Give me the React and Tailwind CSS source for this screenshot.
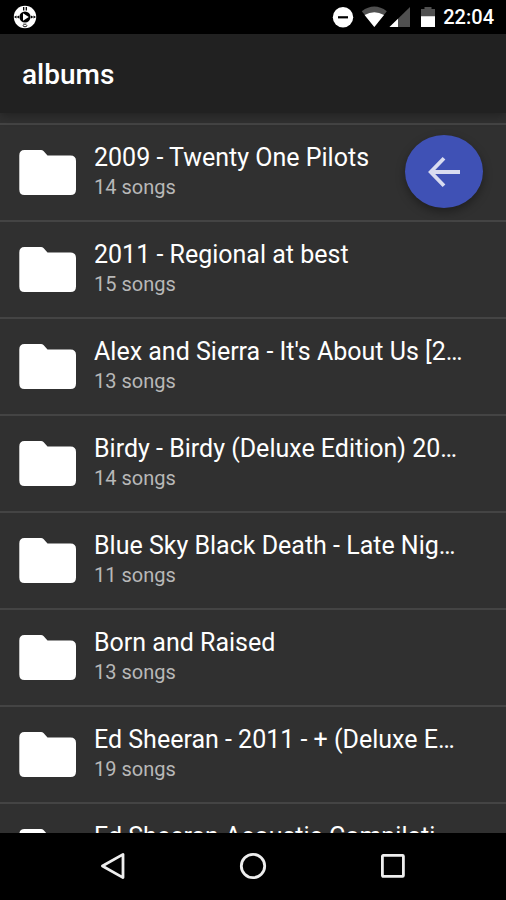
const albums = [
  { title: '2009 - Twenty One Pilots', songs: 14 },
  { title: '2011 - Regional at best', songs: 15 },
  { title: "Alex and Sierra - It's About Us [2…", songs: 13 },
  { title: 'Birdy - Birdy (Deluxe Edition) 20…', songs: 14 },
  { title: 'Blue Sky Black Death - Late Nig…', songs: 11 },
  { title: 'Born and Raised', songs: 13 },
  { title: 'Ed Sheeran - 2011 - + (Deluxe E…', songs: 19 },
  { title: 'Ed Sheeran Acoustic Compilati…', songs: 12 },
]

function PlayerIcon() {
  return (
    <svg width="24" height="24" viewBox="0 0 24 24" aria-hidden="true">
      <circle cx="12" cy="12" r="11.2" fill="#fff" />
      <circle cx="12" cy="12" r="5.6" fill="#000" />
      <path d="M10 8.2v7.6l5.8-3.8z" fill="#fff" />
      <path d="M10.7 2v3.6M13.3 2v3.6" stroke="#000" strokeWidth="1.3" />
      <path d="M1 12l2.5-1.6v3.2zM3.6 12l2.4-1.6v3.2zM23 12l-2.5-1.6v3.2zM20.4 12L18 10.4v3.2z" fill="#000" />
      <path d="M10.2 19.2h3.2M14 20.2a2 1.6 0 1 1-4 0" fill="none" stroke="#000" strokeWidth="0.9" />
    </svg>
  )
}

function StatusBar() {
  return (
    <div className="flex h-[34px] shrink-0 items-center bg-black pr-3 pl-[13px] text-white">
      <PlayerIcon />
      <div className="ml-auto flex items-center">
        <svg width="112" height="22" viewBox="0 0 112 22" aria-hidden="true">
          <circle cx="12" cy="11.3" r="10.2" fill="#fff" />
          <path d="M7 11.3h10" stroke="#000" strokeWidth="2.2" />
          <path d="M30.8 5.2Q43.3-4 55.8 5.2L43.3 21z" fill="#505050" />
          <path d="M33.6 9Q43.3 3.4 53 9L43.3 21z" fill="#fff" />
          <path d="M79 1v20H58.5z" fill="#505050" />
          <path d="M67 12.8V21h-8.5z" fill="#fff" />
          <path d="M90 3h3.5V1h7v2h3.5v7.5H90z" fill="#505050" />
          <path d="M90 10.2h14V21H90z" fill="#fff" />
        </svg>
        <span className="text-xl leading-6 font-medium">22:04</span>
      </div>
    </div>
  )
}

function FolderIcon() {
  return (
    <svg width="57" height="46" viewBox="0 0 57 46" className="shrink-0" aria-hidden="true">
      <path
        d="M5.5 0H22Q23.5 0 24.5 1L28.5 5.5H51.5Q57 5.5 57 11V39.5Q57 45 51.5 45H5.5Q.3 45 .3 39.5V5.5Q.3 0 5.5 0z"
        fill="#fff"
      />
    </svg>
  )
}

function AlbumRow({ album }) {
  return (
    <li className="border-t-2 border-[#444444]">
      <button type="button" className="flex h-[95px] w-full items-center gap-[18px] pr-8 pl-[19px] text-left">
        <FolderIcon />
        <span className="flex min-w-0 flex-1 flex-col pb-[6px]">
          <span className="truncate text-[25px] leading-[34px] text-white">{album.title}</span>
          <span className="text-xl leading-6 text-[#b8b8b8]">{album.songs} songs</span>
        </span>
      </button>
    </li>
  )
}

function NavButton({ label, children }) {
  return (
    <button type="button" aria-label={label} className="flex w-35 justify-center">
      <svg width="28" height="28" viewBox="0 0 28 28" fill="none" stroke="#eee" strokeWidth="2.8" strokeLinejoin="round">
        {children}
      </svg>
    </button>
  )
}

function NavBar() {
  return (
    <nav className="flex h-[67px] shrink-0 items-center justify-center bg-black pb-0.5">
      <NavButton label="Back">
        <path d="M24 2.4v23.2L3.4 14z" />
      </NavButton>
      <NavButton label="Home">
        <circle cx="14" cy="14" r="11.7" />
      </NavButton>
      <NavButton label="Recent apps">
        <rect x="3.4" y="3.4" width="21" height="21" rx="0.8" />
      </NavButton>
    </nav>
  )
}

export default function App() {
  return (
    <div className="flex h-screen flex-col bg-[#303030] font-['Roboto',sans-serif]">
      <StatusBar />
      <header className="z-10 flex h-[79px] shrink-0 items-center bg-[#212121] px-[22px] pt-0.5 shadow-[0_2px_10px_rgba(0,0,0,0.35)]">
        <h1 className="text-[28px] leading-8 font-medium text-white">albums</h1>
      </header>
      <main className="relative min-h-0 flex-1">
        <ul className="h-full overflow-y-auto pt-2.5 [scrollbar-width:none]">
          {albums.map((album) => (
            <AlbumRow key={album.title} album={album} />
          ))}
        </ul>
        <button
          type="button"
          aria-label="Go back"
          className="absolute top-[22px] right-[23px] flex h-[73px] w-[78px] items-center justify-center rounded-[50%] bg-[#3f51b5] shadow-[0_4px_10px_rgba(0,0,0,0.35)]"
        >
          <svg width="34" height="32" viewBox="0 0 34 32" fill="none" stroke="#d9dcf0" strokeWidth="3.8" aria-hidden="true">
            <path d="M17 2.2L3.7 16L17 29.8M4 16h29" />
          </svg>
        </button>
      </main>
      <NavBar />
    </div>
  )
}
